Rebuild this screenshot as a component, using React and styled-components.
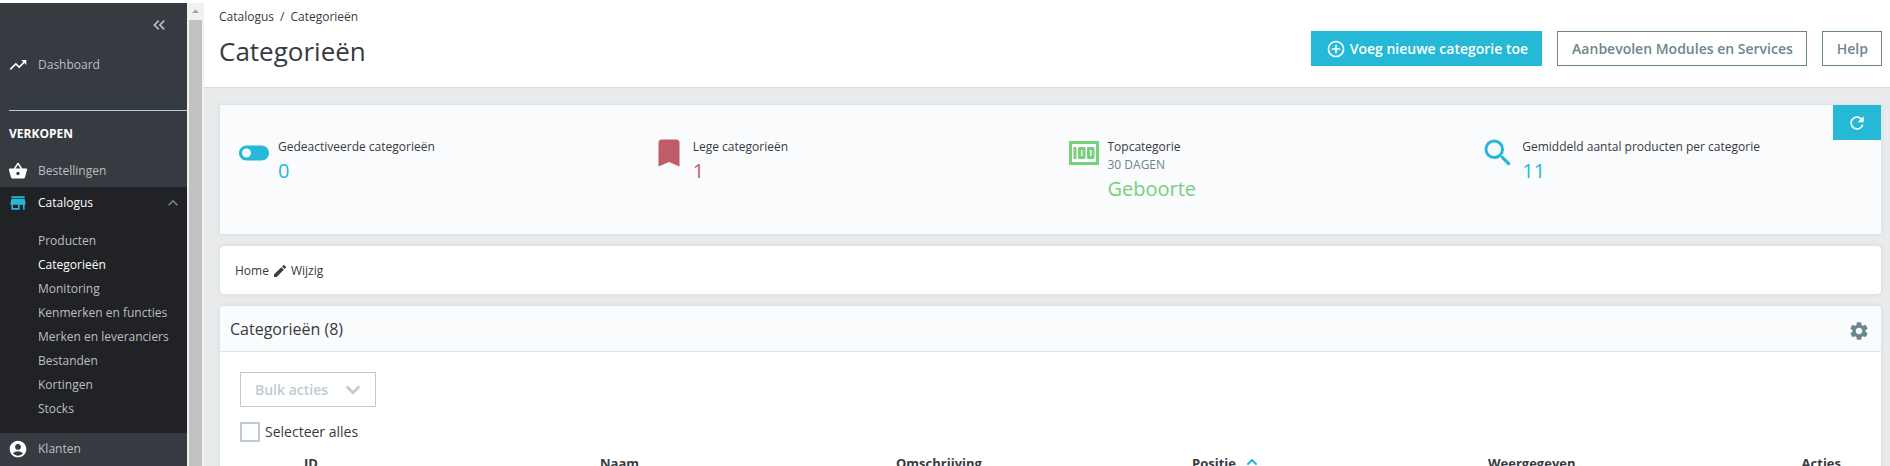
import React from "react";
import styled, { createGlobalStyle } from "styled-components";
import { ChevronDown, ChevronUp } from "lucide-react";
import {
  MdAccountCircle,
  MdAddCircleOutline,
  MdArrowDropUp,
  MdBookmark,
  MdEdit,
  MdExpandLess,
  MdKeyboardDoubleArrowLeft,
  MdMoney,
  MdRefresh,
  MdSearch,
  MdSettings,
  MdShoppingBasket,
  MdStore,
  MdToggleOff,
  MdTrendingUp
} from "react-icons/md";

const GlobalStyle = createGlobalStyle`
  * {
    box-sizing: border-box;
  }

  body {
    margin: 0;
    background: #fff;
    color: #363a41;
    font-family: "Open Sans", "Liberation Sans", sans-serif;
    font-size: 12px;
    line-height: 16px;
  }

  a {
    color: inherit;
    text-decoration: none;
  }

  button {
    padding: 0;
    border: 0;
    background: none;
    font-family: inherit;
    cursor: pointer;
  }
`;

const Page = styled.div`
  display: flex;
  height: 100vh;
  padding-top: 3px;
  overflow: hidden;
`;

const Sidebar = styled.nav`
  flex: none;
  width: 187px;
  overflow: hidden;
  background: #363a41;
  color: #bebebe;
`;

const Collapse = styled.button`
  display: flex;
  margin: 12px 18px 14px auto;
  color: #bebebe;
`;

const MenuLink = styled.a`
  display: flex;
  align-items: center;
  gap: 10px;
  height: 32px;
  padding: 0 8px;
  background: ${props => (props.$open ? "#202226" : "transparent")};
  color: ${props => (props.$open ? "#fff" : "#bebebe")};

  svg:first-child {
    color: ${props => (props.$open ? "#25b9d7" : "#fff")};
  }

  svg:last-child:not(:first-child) {
    margin-left: auto;
    margin-right: -4px;
    color: #6c868e;
  }
`;

const MenuTitle = styled.div`
  margin: 29px 0 0 9px;
  padding: 15px 0 13px;
  border-top: 1px solid #bbcdd2;
  color: #fff;
  font-weight: 700;
`;

const SubMenu = styled.ul`
  margin: 0;
  padding: 10px 0 12px 38px;
  background: #202226;
  list-style: none;
`;

const SubLink = styled.a`
  display: block;
  line-height: 24px;
  color: ${props => (props.$current ? "#fff" : "#bebebe")};
`;

const Scrollbar = styled.div`
  display: flex;
  flex: none;
  flex-direction: column;
  align-items: center;
  width: 17px;
  background: #f1f1f1;
  color: #a3a3a3;
`;

const Thumb = styled.div`
  flex: 1;
  width: 13px;
  background: #c1c1c1;
`;

const Main = styled.main`
  flex: 1;
  min-width: 0;
  overflow: hidden;
  background: #eaebec;
`;

const Header = styled.header`
  display: flex;
  justify-content: space-between;
  height: 85px;
  padding: 6px 8px 0 15px;
  border-bottom: 1px solid #d8dadb;
  background: #fff;
`;

const Breadcrumb = styled.div`
  display: flex;
  gap: 6px;
`;

const Title = styled.h1`
  margin: 8px 0 0;
  font-size: 26px;
  font-weight: 400;
  line-height: 36px;
`;

const Toolbar = styled.div`
  display: flex;
  gap: 15px;
  padding-top: 22px;
`;

const Button = styled.button`
  display: flex;
  align-items: center;
  gap: 4px;
  height: 35px;
  padding: 0 13px 0 14px;
  border: 1px solid ${props => (props.$primary ? "#25b9d7" : "#6c868e")};
  background: ${props => (props.$primary ? "#25b9d7" : "#fff")};
  color: ${props => (props.$primary ? "#fff" : "#6c868e")};
  font-size: 14px;
  font-weight: 600;
  white-space: nowrap;
`;

const Content = styled.div`
  display: flex;
  flex-direction: column;
  gap: 10px;
  padding: 16px 8px 0 15px;
`;

const Card = styled.section`
  border: 1px solid #dbe6e9;
  border-radius: ${props => (props.$square ? "0" : "5px")};
  overflow: hidden;
  background: ${props => (props.$square ? "#fafbfc" : "#fff")};
  box-shadow: 0 0 4px rgba(182, 193, 193, 0.3);
`;

const Kpis = styled.div`
  position: relative;
  display: grid;
  grid-template-columns: repeat(4, 1fr);
  min-height: 129px;
  padding: 30px 2px 0 0;
`;

const Kpi = styled.div`
  display: flex;
  gap: 6px;
  padding-left: 16px;
  color: ${props => props.$color};
`;

const KpiLabel = styled.div`
  padding-top: 3px;
  color: #363a41;
  line-height: 18px;
`;

const KpiNote = styled.div`
  color: #6c868e;
  line-height: 18px;
`;

const KpiValue = styled.div`
  font-size: 20px;
  line-height: 30px;
`;

const Refresh = styled.button`
  position: absolute;
  top: 0;
  right: 0;
  display: flex;
  align-items: center;
  justify-content: center;
  width: 48px;
  height: 35px;
  background: #25b9d7;
  color: #fff;
`;

const Path = styled.div`
  display: flex;
  align-items: center;
  gap: 3px;
  height: 48px;
  padding: 2px 15px 0;
`;

const EditLink = styled.a`
  display: flex;
  align-items: center;
  gap: 3px;
`;

const CardHeader = styled.div`
  display: flex;
  align-items: center;
  justify-content: space-between;
  height: 46px;
  padding: 0 11px 0 10px;
  border-bottom: 1px solid #dbe6e9;
  background: #fafbfc;
`;

const CardTitle = styled.h3`
  margin: 0;
  font-size: 16px;
  font-weight: 500;
`;

const IconButton = styled.button`
  display: flex;
  padding-top: 5px;
  color: #6c868e;
`;

const CardBody = styled.div`
  padding: 20px;
`;

const BulkButton = styled(Button)`
  gap: 14px;
  padding-right: 11px;
  border-color: #bbcdd2;
  color: #bbcdd2;
`;

const SelectAll = styled.label`
  display: flex;
  align-items: center;
  gap: 5px;
  margin-top: 15px;
  font-size: 14px;
  line-height: 20px;
`;

const Checkbox = styled.input`
  appearance: none;
  width: 20px;
  height: 20px;
  margin: 0;
  border: 2px solid #bbcdd2;
  background: #fff;

  &:checked {
    background: #25b9d7;
  }
`;

const Table = styled.table`
  width: 100%;
  margin-top: 8px;
  border-collapse: collapse;
  table-layout: fixed;
  font-size: 13px;
`;

const HeadCell = styled.th`
  width: ${props => props.$width || "auto"};
  padding: 4px 5px;
  text-align: ${props => props.$align || "left"};
  line-height: 18px;
  white-space: nowrap;

  &:last-child {
    padding-right: 20px;
  }

  svg {
    margin-left: 8px;
    vertical-align: -2px;
    color: #25b9d7;
  }
`;

const subItems = [
  "Producten",
  "Categorieën",
  "Monitoring",
  "Kenmerken en functies",
  "Merken en leveranciers",
  "Bestanden",
  "Kortingen",
  "Stocks"
];

const kpis = [
  { icon: MdToggleOff, label: "Gedeactiveerde categorieën", value: "0", color: "#25b9d7" },
  { icon: MdBookmark, label: "Lege categorieën", value: "1", color: "#c05c67" },
  { icon: MdMoney, label: "Topcategorie", note: "30 DAGEN", value: "Geboorte", color: "#78d07d" },
  { icon: MdSearch, label: "Gemiddeld aantal producten per categorie", value: "11", color: "#25b9d7" }
];

function Menu() {
  return (
    <Sidebar>
      <Collapse aria-label="Menu inklappen">
        <MdKeyboardDoubleArrowLeft size={20} />
      </Collapse>
      <MenuLink href="#">
        <MdTrendingUp size={20} />
        Dashboard
      </MenuLink>
      <MenuTitle>VERKOPEN</MenuTitle>
      <MenuLink href="#">
        <MdShoppingBasket size={20} />
        Bestellingen
      </MenuLink>
      <MenuLink href="#" $open>
        <MdStore size={20} />
        Catalogus
        <MdExpandLess size={20} />
      </MenuLink>
      <SubMenu>
        {subItems.map(item => (
          <li key={item}>
            <SubLink href="#" $current={item === "Categorieën"}>
              {item}
            </SubLink>
          </li>
        ))}
      </SubMenu>
      <MenuLink href="#">
        <MdAccountCircle size={20} />
        Klanten
      </MenuLink>
    </Sidebar>
  );
}

export default function App() {
  const [allSelected, setAllSelected] = React.useState(false);

  return (
    <Page>
      <GlobalStyle />
      <Menu />
      <Scrollbar>
        <MdArrowDropUp size={17} />
        <Thumb />
      </Scrollbar>
      <Main>
        <Header>
          <div>
            <Breadcrumb>
              <a href="#">Catalogus</a>
              <span>/</span>
              <a href="#">Categorieën</a>
            </Breadcrumb>
            <Title>Categorieën</Title>
          </div>
          <Toolbar>
            <Button $primary>
              <MdAddCircleOutline size={20} />
              Voeg nieuwe categorie toe
            </Button>
            <Button>Aanbevolen Modules en Services</Button>
            <Button>Help</Button>
          </Toolbar>
        </Header>
        <Content>
          <Card $square>
            <Kpis>
              {kpis.map(({ icon: Icon, label, note, value, color }) => (
                <Kpi key={label} $color={color}>
                  <Icon size={36} />
                  <div>
                    <KpiLabel>{label}</KpiLabel>
                    {note && <KpiNote>{note}</KpiNote>}
                    <KpiValue>{value}</KpiValue>
                  </div>
                </Kpi>
              ))}
              <Refresh aria-label="Vernieuwen">
                <MdRefresh size={20} />
              </Refresh>
            </Kpis>
          </Card>
          <Card>
            <Path>
              <a href="#">Home</a>
              <EditLink href="#">
                <MdEdit size={16} />
                Wijzig
              </EditLink>
            </Path>
          </Card>
          <Card>
            <CardHeader>
              <CardTitle>Categorieën (8)</CardTitle>
              <IconButton aria-label="Instellingen">
                <MdSettings size={22} />
              </IconButton>
            </CardHeader>
            <CardBody>
              <BulkButton disabled>
                Bulk acties
                <ChevronDown size={22} strokeWidth={3} />
              </BulkButton>
              <SelectAll>
                <Checkbox
                  type="checkbox"
                  checked={allSelected}
                  onChange={() => setAllSelected(!allSelected)}
                />
                Selecteer alles
              </SelectAll>
              <Table>
                <thead>
                  <tr>
                    <HeadCell as="td" $width="59px" />
                    <HeadCell>ID</HeadCell>
                    <HeadCell>Naam</HeadCell>
                    <HeadCell>Omschrijving</HeadCell>
                    <HeadCell>
                      Positie
                      <ChevronUp size={16} strokeWidth={3} />
                    </HeadCell>
                    <HeadCell>Weergegeven</HeadCell>
                    <HeadCell $width="82px" $align="right">Acties</HeadCell>
                  </tr>
                </thead>
              </Table>
            </CardBody>
          </Card>
        </Content>
      </Main>
    </Page>
  );
}
